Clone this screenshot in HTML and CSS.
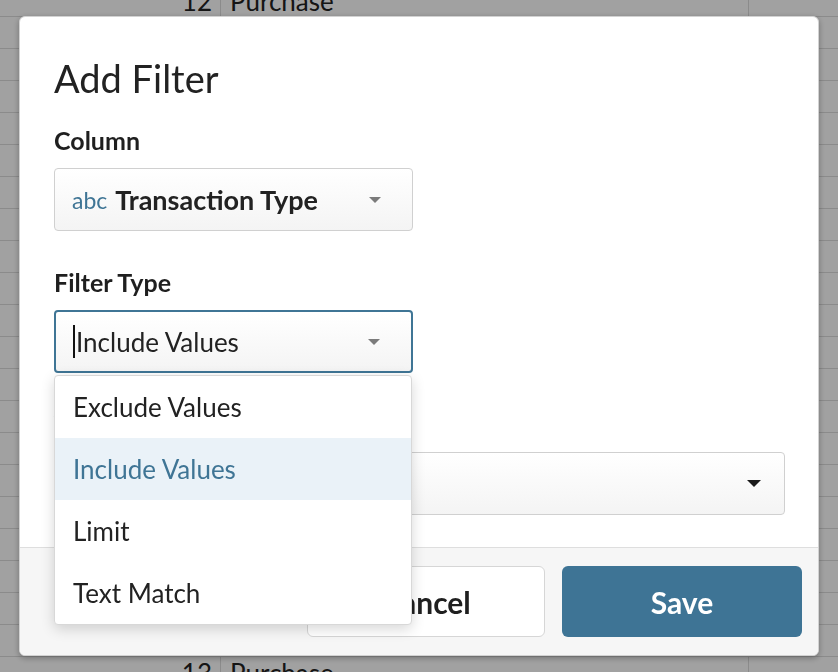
FILE: index.html
```html
<!DOCTYPE html>
<html lang="en">
<head>
    <meta charset="UTF-8">
    <meta name="viewport" content="width=device-width, initial-scale=1.0">
    <title>Add Filter</title>
    <link rel="stylesheet" href="styles.css">
</head>
<body>

<!-- the sheet sitting behind the dialog -->
<div class="sheet">
    <div class="row"><div class="cell num">12</div><div class="cell val">Purchase</div><div class="cell rest"></div></div>
    <div class="row"><div class="cell num">4</div><div class="cell val">Refund</div><div class="cell rest"></div></div>
    <div class="row"><div class="cell num">7</div><div class="cell val">Purchase</div><div class="cell rest"></div></div>
    <div class="row"><div class="cell num">1</div><div class="cell val">Purchase</div><div class="cell rest"></div></div>
    <div class="row"><div class="cell num">9</div><div class="cell val">Refund</div><div class="cell rest"></div></div>
    <div class="row"><div class="cell num">3</div><div class="cell val">Purchase</div><div class="cell rest"></div></div>
    <div class="row"><div class="cell num">15</div><div class="cell val">Purchase</div><div class="cell rest"></div></div>
    <div class="row"><div class="cell num">2</div><div class="cell val">Refund</div><div class="cell rest"></div></div>
    <div class="row"><div class="cell num">8</div><div class="cell val">Purchase</div><div class="cell rest"></div></div>
    <div class="row"><div class="cell num">6</div><div class="cell val">Purchase</div><div class="cell rest"></div></div>
    <div class="row"><div class="cell num">11</div><div class="cell val">Refund</div><div class="cell rest"></div></div>
    <div class="row"><div class="cell num">5</div><div class="cell val">Purchase</div><div class="cell rest"></div></div>
    <div class="row"><div class="cell num">10</div><div class="cell val">Purchase</div><div class="cell rest"></div></div>
    <div class="row"><div class="cell num">14</div><div class="cell val">Refund</div><div class="cell rest"></div></div>
    <div class="row"><div class="cell num">2</div><div class="cell val">Purchase</div><div class="cell rest"></div></div>
    <div class="row"><div class="cell num">9</div><div class="cell val">Purchase</div><div class="cell rest"></div></div>
    <div class="row"><div class="cell num">7</div><div class="cell val">Refund</div><div class="cell rest"></div></div>
    <div class="row"><div class="cell num">3</div><div class="cell val">Purchase</div><div class="cell rest"></div></div>
    <div class="row"><div class="cell num">16</div><div class="cell val">Purchase</div><div class="cell rest"></div></div>
    <div class="row"><div class="cell num">4</div><div class="cell val">Refund</div><div class="cell rest"></div></div>
    <div class="row"><div class="cell num">8</div><div class="cell val">Purchase</div><div class="cell rest"></div></div>
    <div class="row"><div class="cell num">13</div><div class="cell val">Purchase</div><div class="cell rest"></div></div>
</div>

<div class="backdrop">
    <div class="modal">
        <div class="modal-body">
            <h1 class="modal-title">Add Filter</h1>

            <div class="field">
                <div class="field-label">Column</div>
                <div class="select">
                    <span class="type-tag">abc</span>
                    <span class="select-value strong">Transaction Type</span>
                    <span class="caret"></span>
                </div>
            </div>

            <div class="field">
                <div class="field-label">Filter Type</div>
                <div class="select focused">
                    <span class="text-cursor"></span>
                    <span class="select-value">Include Values</span>
                    <span class="caret"></span>
                </div>
                <ul class="menu">
                    <li class="menu-item">Exclude Values</li>
                    <li class="menu-item active">Include Values</li>
                    <li class="menu-item">Limit</li>
                    <li class="menu-item">Text Match</li>
                </ul>
            </div>

            <div class="field">
                <div class="field-label">Values</div>
                <div class="select wide">
                    <span class="select-value"></span>
                    <span class="caret dark"></span>
                </div>
            </div>
        </div>

        <div class="modal-footer">
            <button class="btn cancel-btn">Cancel</button>
            <button class="btn save-btn">Save</button>
        </div>
    </div>
</div>

</body>
</html>
```

FILE: styles.css
```css
body, html {
    margin: 0;
    padding: 0;
    font-family: Lato, "Liberation Sans", sans-serif;
    color: #1f1f1f;
    background-color: #fff;
    overflow: hidden;
}

/* sheet behind the dialog */
.sheet {
    margin-top: -15px;
}
.row {
    display: flex;
    height: 32px;
    box-sizing: border-box;
    border-bottom: 1px solid #dcdcdc;
    font-size: 26px;
    color: #222;
}
.cell {
    display: flex;
    align-items: center;
    box-sizing: border-box;
    border-right: 1px solid #dcdcdc;
}
.cell.num {
    width: 221px;
    justify-content: flex-end;
    padding-right: 8px;
}
.cell.val {
    width: 528px;
    padding-left: 9px;
}
.cell.rest {
    flex: 1;
    border-right: none;
}

.backdrop {
    position: fixed;
    inset: 0;
    background-color: rgba(0, 0, 0, 0.37);
}

.modal {
    margin: 16px 0 0 19px;
    width: 800px;
    height: 640px;
    box-sizing: border-box;
    display: flex;
    flex-direction: column;
    background-color: white;
    border: 1px solid #d2d2d2;
    border-radius: 6px;
    box-shadow: 0 2px 6px rgba(0, 0, 0, 0.3);
    overflow: hidden;
}
.modal-body {
    flex: 1;
    min-height: 0;
    padding: 37px 34px 0;
}
.modal-title {
    margin: 0 0 21px;
    font-size: 38px;
    font-weight: normal;
    line-height: 48px;
    color: #222;
}

.field {
    position: relative;
    margin-bottom: 34px;
}
.field:last-child {
    margin-bottom: 0;
}
.field-label {
    font-size: 25px;
    font-weight: bold;
    line-height: 34px;
    margin-bottom: 11px;
    color: #1f1f1f;
}

.select {
    display: flex;
    align-items: center;
    width: 359px;
    height: 63px;
    box-sizing: border-box;
    padding: 0 31px 0 17px;
    border: 1px solid #d0d0d0;
    border-radius: 4px;
    background: linear-gradient(#ffffff, #f4f4f4);
}
.select.wide {
    width: 731px;
    padding-right: 23px;
}
.select.focused {
    border: 2px solid #3f7595;
    padding-left: 17px;
}
.type-tag {
    font-size: 23px;
    color: #3f7595;
    margin-right: 8px;
}
.select-value {
    font-size: 26px;
    color: #222;
}
.select-value.strong {
    font-size: 27px;
    font-weight: bold;
}
.text-cursor {
    width: 2px;
    height: 33px;
    background-color: #111;
    margin-right: 1px;
}
.caret {
    margin-left: auto;
    width: 0;
    height: 0;
    border-left: 6px solid transparent;
    border-right: 6px solid transparent;
    border-top: 6px solid #7b7b7b;
}
.caret.dark {
    border-left-width: 7px;
    border-right-width: 7px;
    border-top: 7px solid #1a1a1a;
}

/* open dropdown list */
.menu {
    position: absolute;
    top: 110px;
    left: 0;
    width: 358px;
    box-sizing: border-box;
    margin: 0;
    padding: 0;
    list-style: none;
    background-color: white;
    border: 1px solid #d8d8d8;
    border-radius: 4px;
    box-shadow: 0 4px 14px rgba(0, 0, 0, 0.16);
    z-index: 2;
}
.menu-item {
    height: 62px;
    display: flex;
    align-items: center;
    padding-left: 18px;
    font-size: 26px;
    color: #222;
}
.menu-item.active {
    background-color: #eaf2f8;
    color: #3f7595;
}

.modal-footer {
    display: flex;
    justify-content: flex-end;
    gap: 17px;
    padding: 18px 16px;
    background-color: #f6f6f6;
    border-top: 1px solid #dedede;
}
.btn {
    width: 240px;
    height: 71px;
    border-radius: 6px;
    font-family: Lato, "Liberation Sans", sans-serif;
    font-size: 30px;
    font-weight: bold;
    cursor: pointer;
}
.cancel-btn {
    width: 238px;
    background-color: white;
    border: 1.5px solid #d6d6d6;
    color: #1f1f1f;
}
.save-btn {
    background-color: #3e7495;
    border: none;
    color: white;
}
```
